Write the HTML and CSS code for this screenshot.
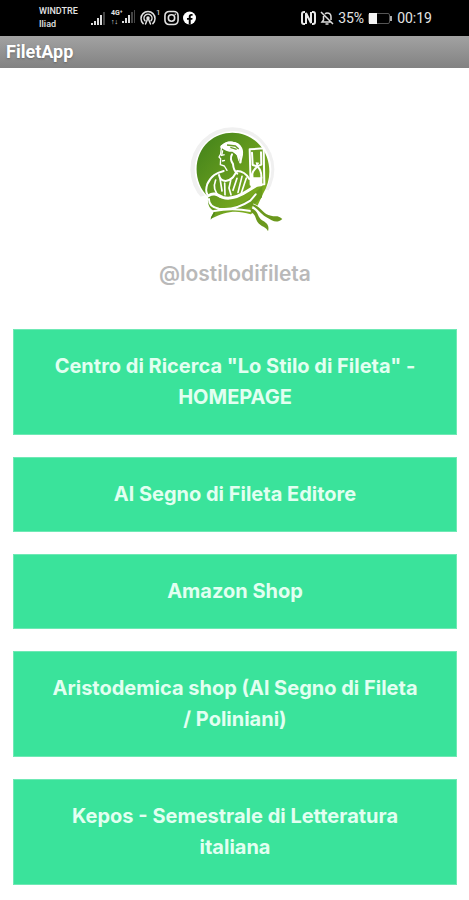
FILE: index.html
```html
<!DOCTYPE html>
<html lang="it">
<head>
<meta charset="utf-8">
<meta name="viewport" content="width=device-width, initial-scale=1">
<title>FiletApp</title>
<link rel="stylesheet" href="styles.css">
</head>
<body>
<div class="status">
  <div class="status-group">
    <div class="carriers"><span>WINDTRE</span><span>Iliad</span></div>
    <svg class="signal" width="16" height="15" viewBox="0 0 16 15" aria-hidden="true">
      <path d="M0 12h2v2H0zM3 10h2v4H3zM6 7h2v7H6zM9 4h2v10H9z" fill="#ddd"/><path d="M12 1h2v13h-2z" fill="#444"/>
    </svg>
    <div class="mobile">
      <div class="network"><span>4G⁺</span><span>↑↓</span></div>
      <svg width="14" height="15" viewBox="0 0 14 15" aria-hidden="true">
        <path d="M0 12h2v2H0zM3 9h2v5H3zM6 6h2v8H6z" fill="#ddd"/><path d="M9 3h2v11H9zM12 1h1v13h-1z" fill="#444"/>
      </svg>
    </div>
    <div class="hotspot">
      <svg width="16" height="16" viewBox="0 0 16 16" fill="none" stroke="#e2e2e2" stroke-width="1.5" stroke-linecap="round" aria-hidden="true">
        <path d="M3.2 13.6a7 7 0 1 1 9.6 0M5 10.8a4 4 0 1 1 6 0M8 8l-2.500 6M8 8l2.500 6"/><circle cx="8" cy="8" r="1" fill="#e2e2e2"/>
      </svg><sup>1</sup>
    </div>
    <svg width="15" height="16" viewBox="0 0 16 16" fill="none" stroke="#e2e2e2" stroke-width="1.700" aria-hidden="true">
      <rect x="1" y="1" width="14" height="14" rx="4.500"/><circle cx="8" cy="8" r="3.400"/><circle cx="12" cy="4" r=".5" fill="#e2e2e2" stroke-width=".8"/>
    </svg>
    <svg class="facebook" width="13" height="14" viewBox="0 0 14 14" aria-hidden="true">
      <circle cx="7" cy="7" r="7" fill="#fff"/><path d="M6.200 14V9H4.300V6.900h1.900V5.600c0-1.900 1.100-3 2.900-3h1.200v1.900H9.200c-.7 0-.9.400-.9 1v1.400h2L10 9H8.300v5z" fill="#000"/>
    </svg>
  </div>
  <div class="status-group">
    <svg width="15" height="14" viewBox="0 0 15 14" fill="none" stroke="#e8e8e8" stroke-width="2" aria-hidden="true">
      <path d="M4 1H3Q1 1 1 3v8q0 2 2 2h1M11 1h1q2 0 2 2v8q0 2-2 2h-1M5 13V2l5 10V1"/>
    </svg>
    <svg class="bell" width="14" height="14" viewBox="0 0 14 14" fill="none" stroke="#ddd" stroke-width="1.500" aria-hidden="true">
      <path d="M1 1l12 12M3.500 5v4L2 11h8.500M5 3Q6 2 7 2q4 0 4 4v3M5.500 13h3"/>
    </svg>
    <span>35%</span>
    <svg class="battery" width="25" height="13" viewBox="0 0 25 13" aria-hidden="true">
      <rect x=".5" y="1.500" width="21" height="10" rx="1.500" fill="none" stroke="#555"/><path d="M1 1h8v11H1z" fill="#f4f4f4"/><path d="M22 4h2v5h-2z" fill="#aaa"/>
    </svg>
    <span>00:19</span>
  </div>
</div>
<header class="titlebar"><h1>FiletApp</h1></header>
<main class="page">
  <svg class="logo" viewBox="-8 0 345 375" role="img" aria-label="Lo Stilo di Fileta">
    <defs>
      <linearGradient id="leaf" x1="0" y1="0" x2="1" y2="1"><stop offset="0" stop-color="#40811b"/><stop offset="1" stop-color="#8bb621"/></linearGradient>
    </defs>
    <circle cx="155" cy="163" r="126" fill="#f0f0f0"/>
    <circle cx="157" cy="163" r="115" fill="#fff"/>
    <path d="M30 255l85-28 120-10 60 20-20 70H60z" fill="#fff"/>
    <path d="M83 245C35 203 37 120 83 80c45-40 116-35 154 10 35 39 38 101 11 145l-26 55-12 8c-43-14-74-10-119 13l9-23c-15-8-21-22-17-43z" fill="url(#leaf)"/>
    <path d="M89 270c31 24 80 7 122-24l34-34-1 35-34 30c-40 12-73 11-110 9z" fill="#6a9c1c"/>
    <g fill="none" stroke="#fff" stroke-linecap="round" stroke-linejoin="round">
      <path d="M122 96c15-19 51-16 59 4 8 17-1 25-2 42M123 94c9 9 20 13 33 13l17 12" stroke-width="7"/>
      <path d="M122 100l-2 17-5 9 5 5-1 18 12 4 8 13" stroke-width="4"/>
      <path d="M154 118c-6 9-3 22 3 29 1 15 4 22 13 29" stroke-width="6"/>
      <path d="M129 168c-22 6-37 13-49 39-5 15-4 25 0 31M115 180c4 20 24 24 42 7l12-19c19 0 29 10 37 24" stroke-width="6"/>
      <path d="M105 195c-8 20-5 35 12 50M118 190l6 38M132 204l1 35M150 197l-5 22 6 20M169 190l-12 36M184 184l-12 48M197 189l-15 45" stroke-width="5"/>
      <path d="M84 242c16-12 28-1 42 5 29 9 57-7 78-21l22-14" stroke-width="9"/>
      <path d="M85 252c-1 18 13 26 30 29 34 5 62-3 94-24l16-19M100 288c42-8 74-7 110 0" stroke-width="6"/>
      <path d="M207 103l42-3 2 108-41 1zM214 113l2 37 13 4 13-5-1-37M229 154c-4 9-15 13-14 24l1 18M229 154c9 7 14 15 13 35" stroke-width="6"/>
    </g>
    <path d="M139 81c15-4 40 2 43 20 4 15-4 27-8 39l-6-20-14-15-26-5c-8-5-4-13 11-19z" fill="#fff"/>
    <path d="M139 90l25 3 10 9M149 97l19 6" fill="none" stroke="#659a24" stroke-width="4"/>
    <path d="M211 187h34v26l-35 5zM225 142l11 1-8 12z" fill="#fff"/>
    <path d="M126 106l-3 15 9-2M124 138l9-2" fill="none" stroke="#fff" stroke-width="4"/>
    <path d="M101 290L91 306l-1 8 13-17z" fill="#4f871b"/>
    <g fill="none" stroke="#fff" stroke-width="15"><path d="M216 273c26 8 31 31 60 35 17 5 19-4 30 3M214 280c19 11 11 28 27 38 17 8 18 13 20 25"/></g>
    <path d="M212 266c28 5 34 32 59 36 16 5 17-4 34 10-18 15-28 6-49-6-20-12-23-25-44-35zM210 279c25 8 18 25 34 37 14 8 23 15 18 33-3-14-22-13-32-29-7-11-3-20-20-30z" fill="#6b981d"/>
  </svg>
  <p class="handle">@lostilodifileta</p>
  <nav class="links" aria-label="Collegamenti">
    <a href="#home">Centro di Ricerca "Lo Stilo di Fileta" - HOMEPAGE</a>
    <a href="#editore">Al Segno di Fileta Editore</a>
    <a href="#amazon">Amazon Shop</a>
    <a href="#aristodemica">Aristodemica shop (Al Segno di Fileta /&nbsp;Poliniani)</a>
    <a href="#kepos">Kepos - Semestrale di Letteratura italiana</a>
  </nav>
</main>
</body>
</html>
```
FILE: styles.css
```css
* {
  box-sizing: border-box;
}

body {
  margin: 0;
  background: #fff;
  font-family: Inter, "Liberation Sans", sans-serif;
}

.status {
  display: flex;
  justify-content: space-between;
  align-items: center;
  height: 36px;
  padding: 0 37px 0 39px;
  background: #000;
  color: #e4e4e4;
  font-family: Roboto, sans-serif;
  font-size: 14px;
  line-height: 16px;
}

.status-group {
  display: flex;
  align-items: center;
  gap: 4px;
}

.carriers {
  display: flex;
  flex-direction: column;
  width: 48px;
  font-size: 9px;
  font-weight: 500;
  line-height: 13px;
}

.mobile {
  display: flex;
}

.network {
  display: flex;
  flex-direction: column;
  width: 11px;
  font-size: 7px;
  font-weight: 700;
  line-height: 9px;
}

.hotspot {
  display: flex;
}

.hotspot sup {
  width: 4px;
  font-size: 8px;
  line-height: 6px;
}

.titlebar {
  padding: 4px 6px;
  background: linear-gradient(#a2a2a2, #828282);
}

.titlebar h1 {
  margin: 0;
  color: #fff;
  font-family: Roboto, sans-serif;
  font-size: 18px;
  font-weight: 700;
  line-height: 24px;
  text-shadow: 0 1px 2px #666;
}

.page {
  display: flex;
  flex-direction: column;
  align-items: center;
  padding: 47px 12px 16px 13px;
}

.logo {
  width: 115px;
  height: 125px;
}

.handle {
  margin: 21px 0 42px;
  color: #b9b9b9;
  font-size: 21px;
  font-weight: 600;
  line-height: 26px;
}

.links {
  display: flex;
  flex-direction: column;
  align-self: stretch;
  gap: 22px;
}

.links a {
  padding: 21px 32px;
  border: 1px solid #6fe9b5;
  background: #3ae39b;
  color: #e2fff1;
  font-size: 20px;
  font-weight: 700;
  line-height: 31px;
  text-align: center;
  text-decoration: none;
}
```
